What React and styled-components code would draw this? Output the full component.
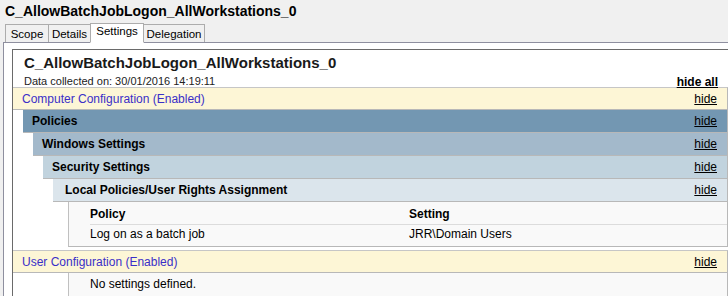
import React from "react";
import styled, { createGlobalStyle } from "styled-components";

const GlobalStyle = createGlobalStyle`
  html, body {
    margin: 0;
    padding: 0;
    background: #f0f0f0;
    overflow: hidden;
  }
  body {
    font-family: "Liberation Sans", Arial, sans-serif;
    color: #000;
  }
`;

const Page = styled.div`
  width: 728px;
  height: 296px;
  padding-top: 3px;
  box-sizing: border-box;
  overflow: hidden;
`;

const WindowTitle = styled.div`
  margin-left: 5px;
  height: 19px;
  font-size: 14px;
  font-weight: bold;
  line-height: 17px;
`;

const TabBar = styled.div`
  display: flex;
  align-items: flex-end;
  height: 20px;
  margin-left: 5px;
`;

const Tab = styled.div`
  width: ${(p) => p.$width}px;
  height: ${(p) => (p.$active ? "20px" : "18px")};
  margin-bottom: ${(p) => (p.$active ? "-1px" : "0")};
  box-sizing: border-box;
  flex: none;
  border: 1px solid #acacac;
  border-bottom: ${(p) => (p.$active ? "1px solid #fff" : "none")};
  border-left: ${(p) => (p.$first || p.$active ? "1px solid #acacac" : "none")};
  border-right: ${(p) => (p.$beforeActive ? "none" : "1px solid #acacac")};
  background: ${(p) => (p.$active ? "#fff" : "#f0f0f0")};
  text-align: center;
  font-size: 11.5px;
  line-height: ${(p) => (p.$active ? "15px" : "18px")};
  white-space: nowrap;
`;

const Panel = styled.div`
  margin-left: 3px;
  border-top: 1px solid #8e8f9f;
  border-left: 1px solid #8e8f9f;
  background: #fff;
  padding: 6px 0 0 8px;
  height: 260px;
`;

const Report = styled.div`
  background: #fff;
  border-top: 1px solid #6a6a6a;
  border-left: 1px solid #6a6a6a;
  height: 100%;
`;

const ReportHead = styled.div`
  padding: 4px 10px 0 11px;
  height: 33px;
`;

const ReportTitle = styled.div`
  font-size: 15px;
  font-weight: bold;
  line-height: 18px;
  color: #1a1a1a;
`;

const MetaRow = styled.div`
  display: flex;
  justify-content: space-between;
  align-items: flex-end;
  margin-top: 3px;
`;

const Meta = styled.span`
  font-size: 11px;
  line-height: 13px;
  color: #222;
`;

const HideAll = styled.span`
  font-size: 12px;
  font-weight: bold;
  text-decoration: underline;
  line-height: 12px;
`;

const Block = styled.div`
  margin-left: ${(p) => p.$indent || 0}px;
  margin-top: ${(p) => p.$gap || 0}px;
`;

const Heading = styled.div`
  display: flex;
  justify-content: space-between;
  align-items: center;
  height: ${(p) => (p.$top ? 21 : 22)}px;
  box-sizing: content-box;
  padding: 0 10px 0 ${(p) => p.$pad || 9}px;
  background: ${(p) => p.$bg};
  border-top: ${(p) => (p.$top ? "1px solid #c6c6c6" : "none")};
  border-bottom: 1px solid #b8b8b8;
  border-right: 1px solid #b8b8b8;
  font-size: 12px;
  font-weight: ${(p) => (p.$bold ? "bold" : "normal")};
  color: ${(p) => p.$color || "#000"};
`;

const HideLink = styled.span`
  font-size: 12px;
  font-weight: normal;
  color: #000;
  text-decoration: underline;
`;

const Settings = styled.div`
  margin-left: ${(p) => p.$indent}px;
  background: #f9f9f9;
  border-left: 1px solid #c0c0c0;
  border-right: 1px solid #b8b8b8;
  border-bottom: 1px solid #b8b8b8;
  padding: ${(p) => p.$pad};
  font-size: 12px;
  height: ${(p) => p.$height}px;
  box-sizing: border-box;
`;

const TableRow = styled.div`
  display: grid;
  grid-template-columns: 319px 1fr;
  height: ${(p) => (p.$head ? "21px" : "18px")};
  align-items: center;
  font-weight: ${(p) => (p.$head ? "bold" : "normal")};
  border-bottom: ${(p) => (p.$head ? "1px solid #dcdcdc" : "none")};
`;

const tabs = [
  { name: "Scope", width: 44 },
  { name: "Details", width: 41 },
  { name: "Settings", width: 54, active: true },
  { name: "Delegation", width: 61 },
];

const levels = [
  { name: "Policies", bg: "#7397b2", pad: 9 },
  { name: "Windows Settings", bg: "#a3b9cb", pad: 9 },
  { name: "Security Settings", bg: "#c1d3de", pad: 9 },
  { name: "Local Policies/User Rights Assignment", bg: "#dbe5ec", pad: 12 },
];

function Nested({ depth }) {
  if (depth >= levels.length) {
    return (
      <Settings $indent={15} $pad="1px 0 0 21px" $height={45}>
        <TableRow $head>
          <span>Policy</span>
          <span>Setting</span>
        </TableRow>
        <TableRow>
          <span>Log on as a batch job</span>
          <span>JRR\Domain Users</span>
        </TableRow>
      </Settings>
    );
  }
  const level = levels[depth];
  return (
    <Block $indent={10}>
      <Heading $bg={level.bg} $pad={level.pad} $bold>
        <span>{level.name}</span>
        <HideLink>hide</HideLink>
      </Heading>
      <Nested depth={depth + 1} />
    </Block>
  );
}

export default function App() {
  return (
    <Page>
      <GlobalStyle />
      <WindowTitle>C_AllowBatchJobLogon_AllWorkstations_0</WindowTitle>
      <TabBar>
        {tabs.map((t, i) => (
          <Tab
            key={t.name}
            $width={t.width}
            $active={t.active}
            $first={i === 0}
            $beforeActive={tabs[i + 1] && tabs[i + 1].active}
          >
            {t.name}
          </Tab>
        ))}
      </TabBar>
      <Panel>
        <Report>
          <ReportHead>
            <ReportTitle>C_AllowBatchJobLogon_AllWorkstations_0</ReportTitle>
            <MetaRow>
              <Meta>Data collected on: 30/01/2016 14:19:11</Meta>
              <HideAll>hide all</HideAll>
            </MetaRow>
          </ReportHead>
          <Block>
            <Heading $bg="#fdf6d6" $color="#3a2fc8" $top>
              <span>Computer Configuration (Enabled)</span>
              <HideLink>hide</HideLink>
            </Heading>
            <Nested depth={0} />
          </Block>
          <Block $gap={3}>
            <Heading $bg="#fdf6d6" $color="#3a2fc8" $top>
              <span>User Configuration (Enabled)</span>
              <HideLink>hide</HideLink>
            </Heading>
            <Settings $indent={55} $pad="4px 0 0 21px" $height={24}>
              No settings defined.
            </Settings>
          </Block>
        </Report>
      </Panel>
    </Page>
  );
}
